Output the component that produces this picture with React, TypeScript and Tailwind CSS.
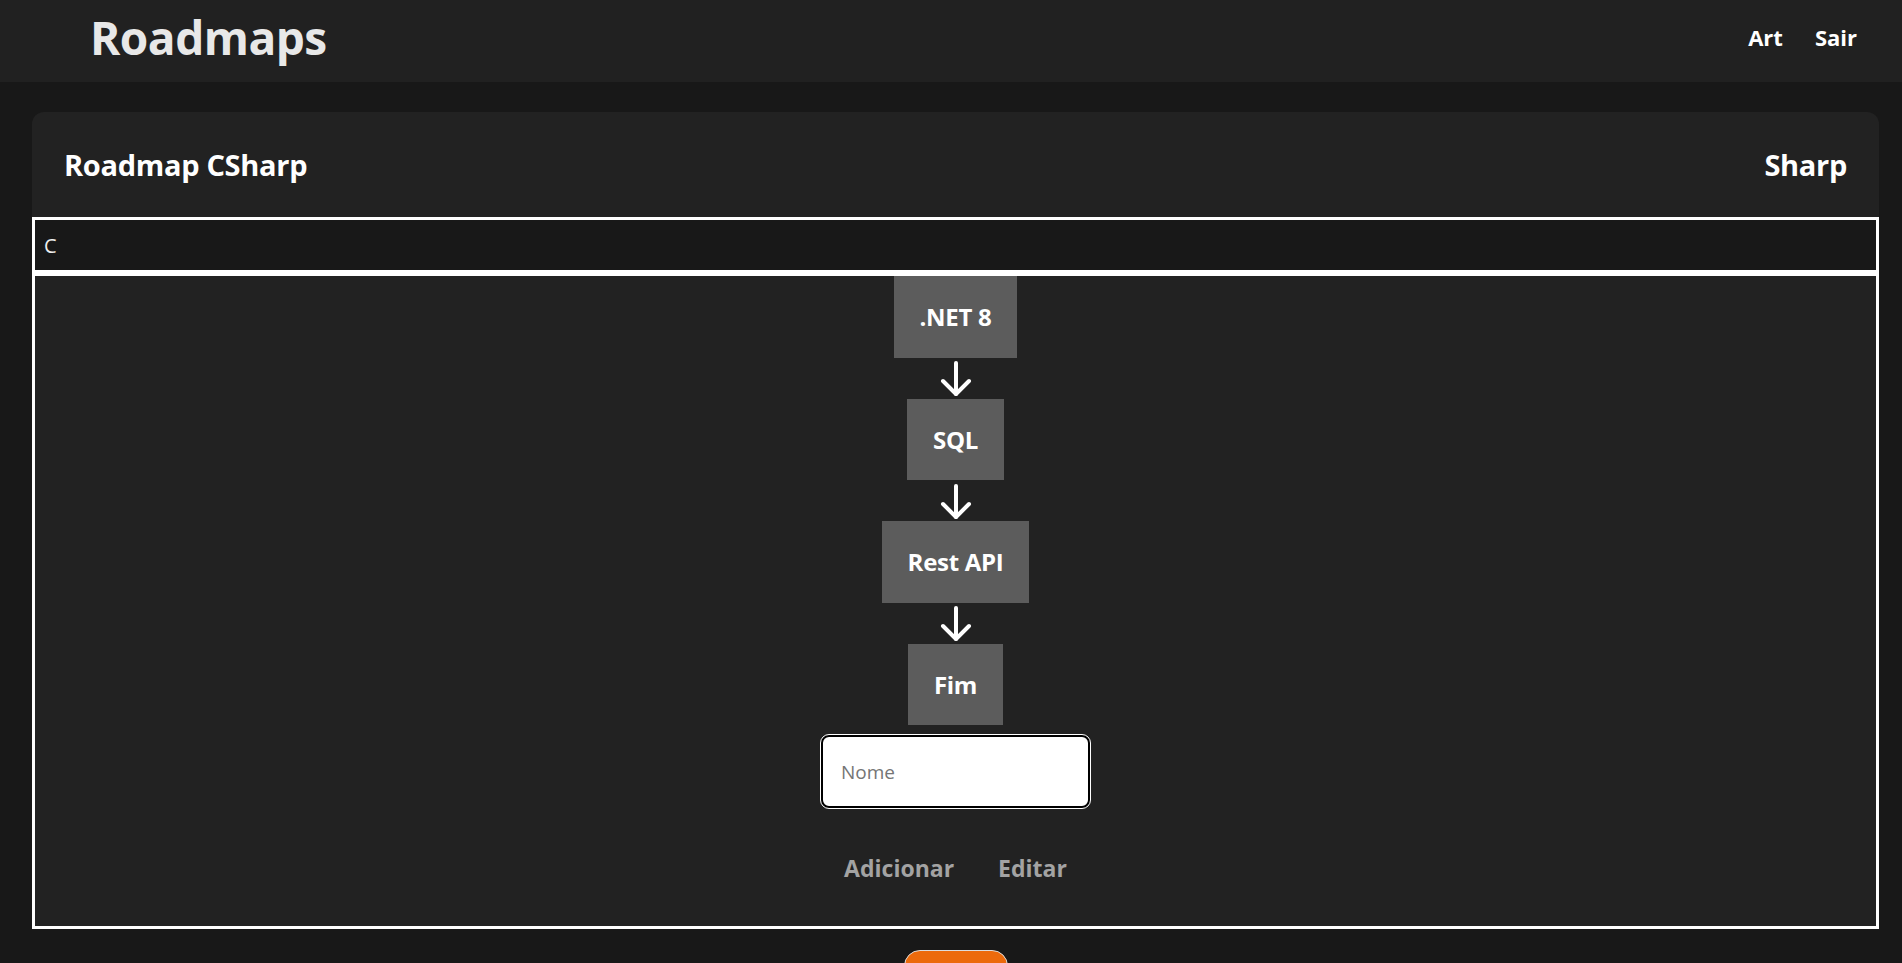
import React, { useState } from 'react';

const font = { fontFamily: '"Open Sans", "Noto Sans", sans-serif' };

const steps = ['.NET 8', 'SQL', 'Rest API', 'Fim'];

const ArrowDown = () => (
  <svg width="32" height="36" viewBox="0 0 32 36" fill="none" stroke="white" strokeWidth="4" strokeLinecap="round" strokeLinejoin="round">
    <path d="M16 3v31" />
    <path d="M3 21l13 13 13-13" />
  </svg>
);

export default function App() {
  const [search, setSearch] = useState('C');
  const [nome, setNome] = useState('');

  return (
    <div className="min-h-screen bg-[#181818] text-white" style={font}>
      <header className="h-[82px] bg-[#212121] flex items-center justify-between pl-[90px] pr-[45px] pb-2">
        <h1 className="text-[46px] font-bold text-[#e8e8e8] leading-none tracking-[-0.5px]">Roadmaps</h1>
        <nav className="flex items-center gap-8 text-[22px] font-bold">
          <a className="cursor-pointer">Art</a>
          <a className="cursor-pointer">Sair</a>
        </nav>
      </header>

      <main className="ml-8 mr-[23px] mt-[30px] flex flex-col items-center">
        <section className="w-full bg-[#222222] rounded-t-xl">
          <div className="h-[105px] flex items-center justify-between px-8">
            <h2 className="text-[29px] font-bold tracking-[-0.3px]">Roadmap CSharp</h2>
            <span className="text-[29px] font-bold tracking-[-0.3px]">Sharp</span>
          </div>

          <input
            value={search}
            onChange={(e) => setSearch(e.target.value)}
            className="block w-full h-[56px] bg-[#181818] border-[3px] border-white pl-[9px] text-[20px] text-[#eeeeee] outline-none"
          />

          <div className="border-[3px] border-white bg-[#222222] flex flex-col items-center">
            {steps.map((s, i) => (
              <React.Fragment key={s}>
                {i > 0 && (
                  <div className="h-[41px] flex items-center justify-center">
                    <ArrowDown />
                  </div>
                )}
                <div className="bg-[#5c5c5c] px-[26px] py-6 text-[24px] leading-[33.5px] font-bold tracking-[-0.3px]">{s}</div>
              </React.Fragment>
            ))}

            <input
              value={nome}
              onChange={(e) => setNome(e.target.value)}
              placeholder="Nome"
              className="mt-[10px] w-[269px] h-[73px] bg-white text-black border-2 border-black outline outline-1 outline-white rounded-lg px-[18px] text-[19px] placeholder:text-[#757575]"
            />

            <div className="flex items-center mt-[22px] mb-5">
              <button className="px-[22px] py-5 text-[23px] leading-[36px] font-bold text-[#a3a3a3]">Adicionar</button>
              <button className="px-[22px] py-5 text-[23px] leading-[36px] font-bold text-[#a3a3a3]">Editar</button>
            </div>
          </div>
        </section>

        <button className="mt-[21px] w-[104px] bg-[#ec6a0c] border border-[#dddddd] rounded-2xl pt-[4px] pb-2 text-[24px] font-bold text-white">
          +
        </button>
      </main>
    </div>
  );
}
